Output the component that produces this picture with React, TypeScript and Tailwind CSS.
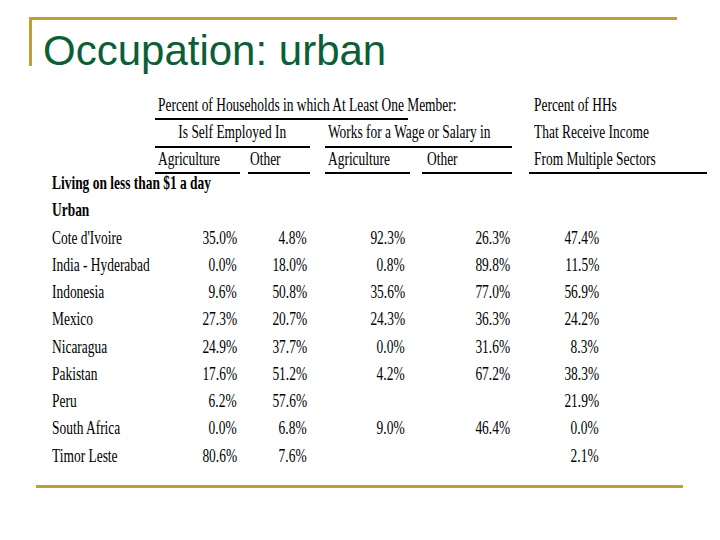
import React from "react";

type Row = { label: string; v: string[] };

const rows: Row[] = [
  { label: "Cote d'Ivoire", v: ["35.0%", "4.8%", "92.3%", "26.3%", "47.4%"] },
  { label: "India - Hyderabad", v: ["0.0%", "18.0%", "0.8%", "89.8%", "11.5%"] },
  { label: "Indonesia", v: ["9.6%", "50.8%", "35.6%", "77.0%", "56.9%"] },
  { label: "Mexico", v: ["27.3%", "20.7%", "24.3%", "36.3%", "24.2%"] },
  { label: "Nicaragua", v: ["24.9%", "37.7%", "0.0%", "31.6%", "8.3%"] },
  { label: "Pakistan", v: ["17.6%", "51.2%", "4.2%", "67.2%", "38.3%"] },
  { label: "Peru", v: ["6.2%", "57.6%", "", "", "21.9%"] },
  { label: "South Africa", v: ["0.0%", "6.8%", "9.0%", "46.4%", "0.0%"] },
  { label: "Timor Leste", v: ["80.6%", "7.6%", "", "", "2.1%"] },
];

function L({ children, bold }: { children: React.ReactNode; bold?: boolean }) {
  return (
    <span
      className={
        "inline-block whitespace-nowrap scale-x-[0.707] origin-left" +
        (bold ? " font-bold" : "")
      }
    >
      {children}
    </span>
  );
}

function R({ children }: { children: React.ReactNode }) {
  return (
    <span className="inline-block whitespace-nowrap scale-x-[0.707] origin-right">
      {children}
    </span>
  );
}

function C({ children }: { children: React.ReactNode }) {
  return (
    <span className="inline-block whitespace-nowrap scale-x-[0.707] origin-center">
      {children}
    </span>
  );
}

export default function App() {
  return (
    <div className="w-[720px] h-[540px] bg-white overflow-hidden flex flex-col">
      {/* Title frame */}
      <div className="ml-[29px] mt-[17px] w-[648px] h-[49px] shrink-0 border-t-[3px] border-l-[3px] border-[#c0a032] pl-[11px] pt-[10px]">
        <div className="font-['Liberation_Sans',Arial,sans-serif] text-[42px] leading-[42px] text-[#0b5e36] whitespace-nowrap">
          Occupation: urban
        </div>
      </div>

      {/* Table */}
      <div className="ml-[52px] mt-[26px] font-['Liberation_Serif','Times_New_Roman',serif] text-[19px] text-black">
        {/* header row 1 */}
        <div className="flex h-[28px] leading-[26px]">
          <div className="w-[103px] shrink-0" />
          <div className="w-[253px] shrink-0 h-full border-b-2 border-black pl-[3px]">
            <L>Percent of Households in which At Least One Member:</L>
          </div>
          <div className="w-[121px] shrink-0" />
          <div className="w-[178px] shrink-0 pl-[5px]">
            <L>Percent of HHs</L>
          </div>
        </div>
        {/* header row 2 */}
        <div className="flex h-[28px] leading-[24px]">
          <div className="w-[103px] shrink-0" />
          <div className="w-[155px] shrink-0 h-full border-b-2 border-black text-center">
            <C>Is Self Employed In</C>
          </div>
          <div className="w-[15px] shrink-0" />
          <div className="w-[187px] shrink-0 h-full border-b-2 border-black pl-[3px]">
            <L>Works for a Wage or Salary in</L>
          </div>
          <div className="w-[17px] shrink-0" />
          <div className="w-[178px] shrink-0 pl-[5px]">
            <L>That Receive Income</L>
          </div>
        </div>
        {/* header row 3 */}
        <div className="flex h-[26px] leading-[21px]">
          <div className="w-[103px] shrink-0" />
          <div className="w-[85px] shrink-0 h-full border-b-2 border-black pl-[3px]">
            <L>Agriculture</L>
          </div>
          <div className="w-[8px] shrink-0" />
          <div className="w-[62px] shrink-0 h-full border-b-2 border-black pl-[2px]">
            <L>Other</L>
          </div>
          <div className="w-[15px] shrink-0" />
          <div className="w-[85px] shrink-0 h-full border-b-2 border-black pl-[3px]">
            <L>Agriculture</L>
          </div>
          <div className="w-[12px] shrink-0" />
          <div className="w-[90px] shrink-0 h-full border-b-2 border-black pl-[5px]">
            <L>Other</L>
          </div>
          <div className="w-[17px] shrink-0" />
          <div className="w-[178px] shrink-0 h-full border-b-2 border-black pl-[5px]">
            <L>From Multiple Sectors</L>
          </div>
        </div>

        {/* section labels */}
        <div className="h-[27.25px] leading-[18px]">
          <L bold>Living on less than $1 a day</L>
        </div>
        <div className="h-[27.25px] leading-[18px]">
          <L bold>Urban</L>
        </div>

        {rows.map((r) => (
          <div key={r.label} className="flex h-[27.25px] leading-[18px]">
            <div className="w-[103px] shrink-0">
              <L>{r.label}</L>
            </div>
            <div className="w-[85px] shrink-0 text-right pr-[3px]">
              <R>{r.v[0]}</R>
            </div>
            <div className="w-[8px] shrink-0" />
            <div className="w-[62px] shrink-0 text-right pr-[3px]">
              <R>{r.v[1]}</R>
            </div>
            <div className="w-[15px] shrink-0" />
            <div className="w-[85px] shrink-0 text-right pr-[5px]">
              <R>{r.v[2]}</R>
            </div>
            <div className="w-[12px] shrink-0" />
            <div className="w-[90px] shrink-0 text-right pr-[2px]">
              <R>{r.v[3]}</R>
            </div>
            <div className="w-[17px] shrink-0" />
            <div className="w-[70px] shrink-0 text-right">
              <R>{r.v[4]}</R>
            </div>
          </div>
        ))}
      </div>

      {/* bottom rule */}
      <div className="ml-[36px] mt-[11px] w-[647px] h-[3px] shrink-0 bg-[#c0a032]" />
    </div>
  );
}
